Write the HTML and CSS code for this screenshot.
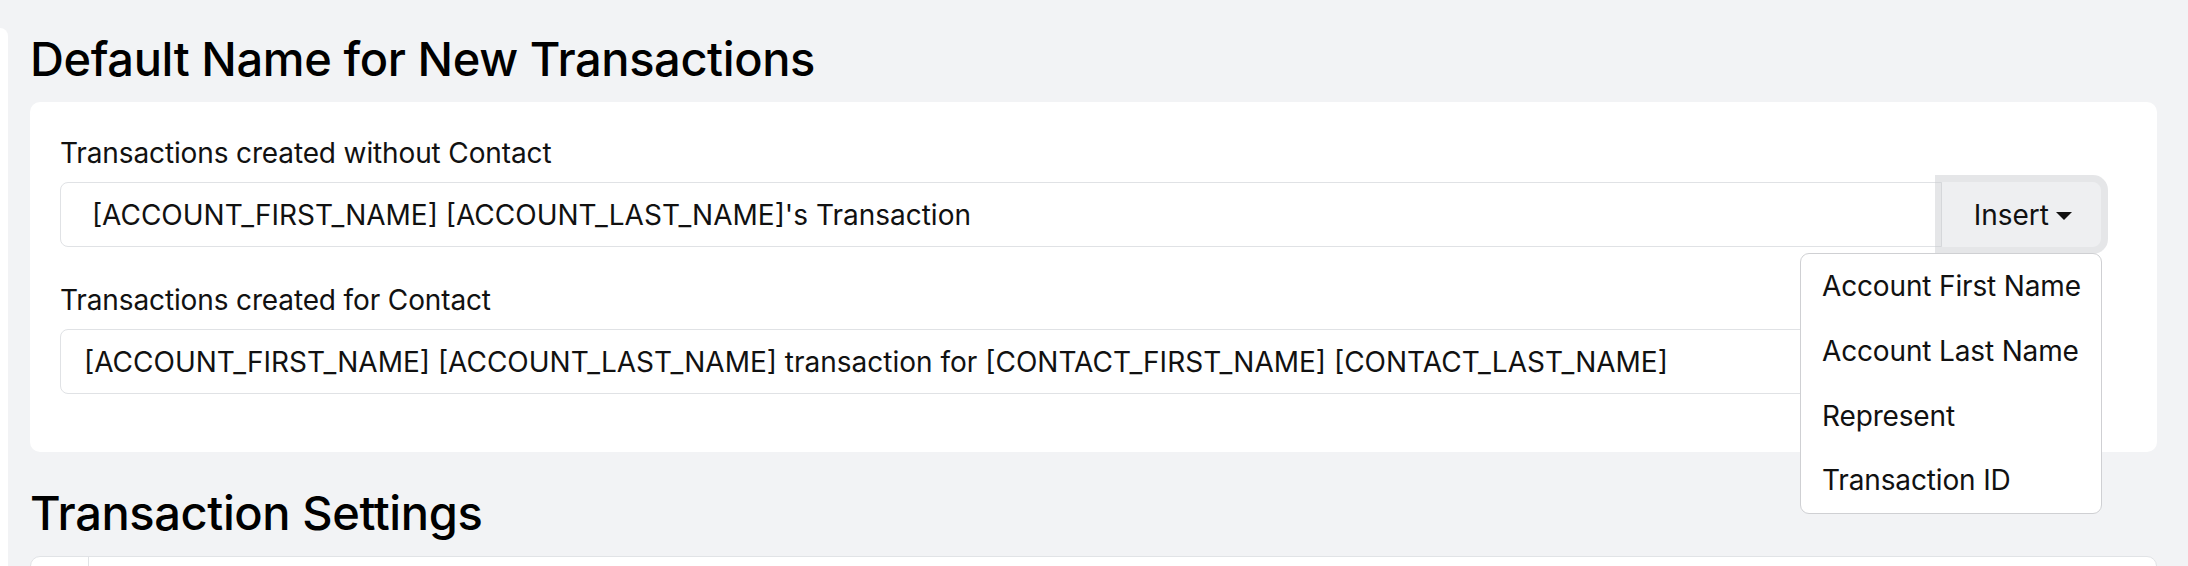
FILE: index.html
```html
<!DOCTYPE html>
<html lang="en">
<head>
<meta charset="utf-8">
<title>Transaction Settings</title>
<link rel="stylesheet" href="styles.css">
</head>
<body>
<div class="layout">
  <aside class="rail"></aside>
  <main class="content">
    <h2 class="section-title">Default Name for New Transactions</h2>
    <section class="card">
      <div class="field">
        <label class="field-label" for="name-no-contact">Transactions created without Contact</label>
        <div class="input-group">
          <input id="name-no-contact" class="form-control" type="text" value=" [ACCOUNT_FIRST_NAME] [ACCOUNT_LAST_NAME]'s Transaction">
          <div class="dropdown">
            <button class="btn-insert" type="button">Insert<span class="caret"></span></button>
            <ul class="dropdown-menu">
              <li class="dropdown-item">Account First Name</li>
              <li class="dropdown-item">Account Last Name</li>
              <li class="dropdown-item">Represent</li>
              <li class="dropdown-item">Transaction ID</li>
            </ul>
          </div>
        </div>
      </div>
      <div class="field">
        <label class="field-label" for="name-contact">Transactions created for Contact</label>
        <div class="input-group">
          <input id="name-contact" class="form-control" type="text" value="[ACCOUNT_FIRST_NAME] [ACCOUNT_LAST_NAME] transaction for [CONTACT_FIRST_NAME] [CONTACT_LAST_NAME]">
        </div>
      </div>
    </section>
    <h2 class="section-title second">Transaction Settings</h2>
    <section class="card table-card">
      <div class="cell cell-narrow"></div>
      <div class="cell cell-wide"></div>
    </section>
  </main>
</div>
</body>
</html>
```
FILE: styles.css
```css
* {
  box-sizing: border-box;
}

html, body {
  margin: 0;
  padding: 0;
}

body {
  background: #f2f3f5;
  font-family: Inter, "Noto Sans", sans-serif;
  color: #111;
  height: 566px;
  overflow: hidden;
}

.layout {
  display: flex;
  min-height: 566px;
}

.rail {
  width: 8px;
  flex: 0 0 8px;
  margin-top: 28px;
  background: #fff;
  border-top-right-radius: 8px;
}

.content {
  flex: 1;
  min-width: 0;
  padding: 31px 31px 0 22px;
}

.section-title {
  margin: 0 0 15px;
  font-size: 47px;
  line-height: 56px;
  font-weight: 500;
  color: #000;
  letter-spacing: -0.4px;
}

.section-title.second {
  margin-top: 33px;
}

.card {
  background: #fff;
  border-radius: 10px;
  padding: 34px 56px 58px 30px;
}

.field + .field {
  margin-top: 36px;
}

.field-label {
  display: block;
  font-size: 28px;
  line-height: 34px;
  margin-bottom: 12px;
  color: #111;
  letter-spacing: -0.13px;
}

.input-group {
  display: flex;
  position: relative;
}

.form-control {
  flex: 1;
  min-width: 0;
  height: 65px;
  margin: 0;
  padding: 1px 22px 0 23px;
  font-family: inherit;
  font-size: 28px;
  color: #111;
  background: #fff;
  border: 1px solid #e0e2e5;
  border-radius: 8px;
  outline: none;
}

.input-group .form-control:not(:last-child) {
  border-top-right-radius: 0;
  border-bottom-right-radius: 0;
}

.dropdown {
  position: relative;
  display: flex;
}

.btn-insert {
  height: 65px;
  margin: 0;
  padding: 0 28px 0 31px;
  font-family: inherit;
  font-size: 28px;
  color: #111;
  background: #eeeff1;
  border: 1px solid #eeeff1;
  border-radius: 0 8px 8px 0;
  box-shadow: 0 0 0 7px rgba(200, 202, 207, 0.48);
  display: flex;
  align-items: center;
  gap: 7px;
  cursor: pointer;
}

.caret {
  display: inline-block;
  width: 0;
  height: 0;
  border-top: 8px solid #111;
  border-left: 8.5px solid transparent;
  border-right: 8.5px solid transparent;
  position: relative;
  top: 1px;
}

.dropdown-menu {
  position: absolute;
  top: calc(100% + 6px);
  right: -1px;
  width: 302px;
  margin: 0;
  padding: 0;
  list-style: none;
  background: #fff;
  border: 1px solid #cfd0d3;
  border-radius: 9px;
  z-index: 10;
}

.dropdown-item {
  padding: 15.35px 22px 15.35px 21px;
  font-size: 28px;
  line-height: 34px;
  color: #111;
  white-space: nowrap;
  letter-spacing: -0.15px;
}

.table-card {
  display: flex;
  height: 60px;
  padding: 0;
  border: 1px solid #e1e3e6;
  border-radius: 10px 10px 0 0;
}

.cell-narrow {
  width: 58px;
  border-right: 1px solid #e1e3e6;
}

.cell-wide {
  flex: 1;
}
```
